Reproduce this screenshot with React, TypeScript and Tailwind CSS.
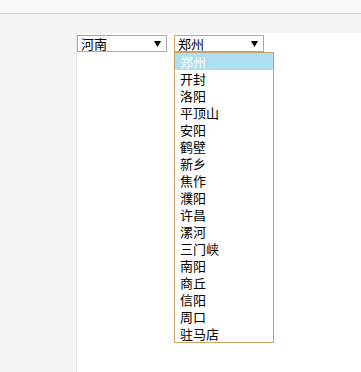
import React from "react"

const CITIES = [
  "郑州", "开封", "洛阳", "平顶山", "安阳", "鹤壁", "新乡", "焦作", "濮阳",
  "许昌", "漯河", "三门峡", "南阳", "商丘", "信阳", "周口", "驻马店",
]

const font = { fontFamily: '"Noto Sans CJK SC", "Liberation Sans", sans-serif' }

const Arrow = () => (
  <svg width="7" height="6" viewBox="0 0 7 6" className="shrink-0">
    <polygon points="0,0 7,0 3.5,6" fill="#000" />
  </svg>
)

export default function App() {
  return (
    <div className="w-[361px] h-[372px] overflow-hidden bg-[#f4f4f4] text-[13px] text-black" style={font}>
      <div className="h-[14px] bg-[#f8f8f8] border-b border-[#d6d6d6]" />
      <div className="flex pt-[19px]">
        <div className="w-[76px] shrink-0" />
        <div className="flex-1 h-[340px] bg-white border-l border-[#e6e6e6] pt-[2px]">
          <div className="flex gap-[7px]">
            <div className="w-[90px] h-[17px] border border-[#a9a9a9] flex items-center justify-between pl-[3px] pr-[5px] leading-none">
              <span>河南</span>
              <Arrow />
            </div>
            <div className="relative">
              <div className="w-[90px] h-[17px] border border-[#d4a45a] flex items-center justify-between pl-[3px] pr-[5px] leading-none">
                <span>郑州</span>
                <Arrow />
              </div>
              <ul className="absolute left-0 top-[17px] w-[100px] bg-white border border-[#c9a265]">
                {CITIES.map((c, i) => (
                  <li
                    key={c}
                    className={`h-[17px] leading-[17px] pl-[5px] ${i === 0 ? "bg-[#addff3] text-white" : ""}`}
                  >
                    {c}
                  </li>
                ))}
              </ul>
            </div>
          </div>
        </div>
      </div>
    </div>
  )
}
